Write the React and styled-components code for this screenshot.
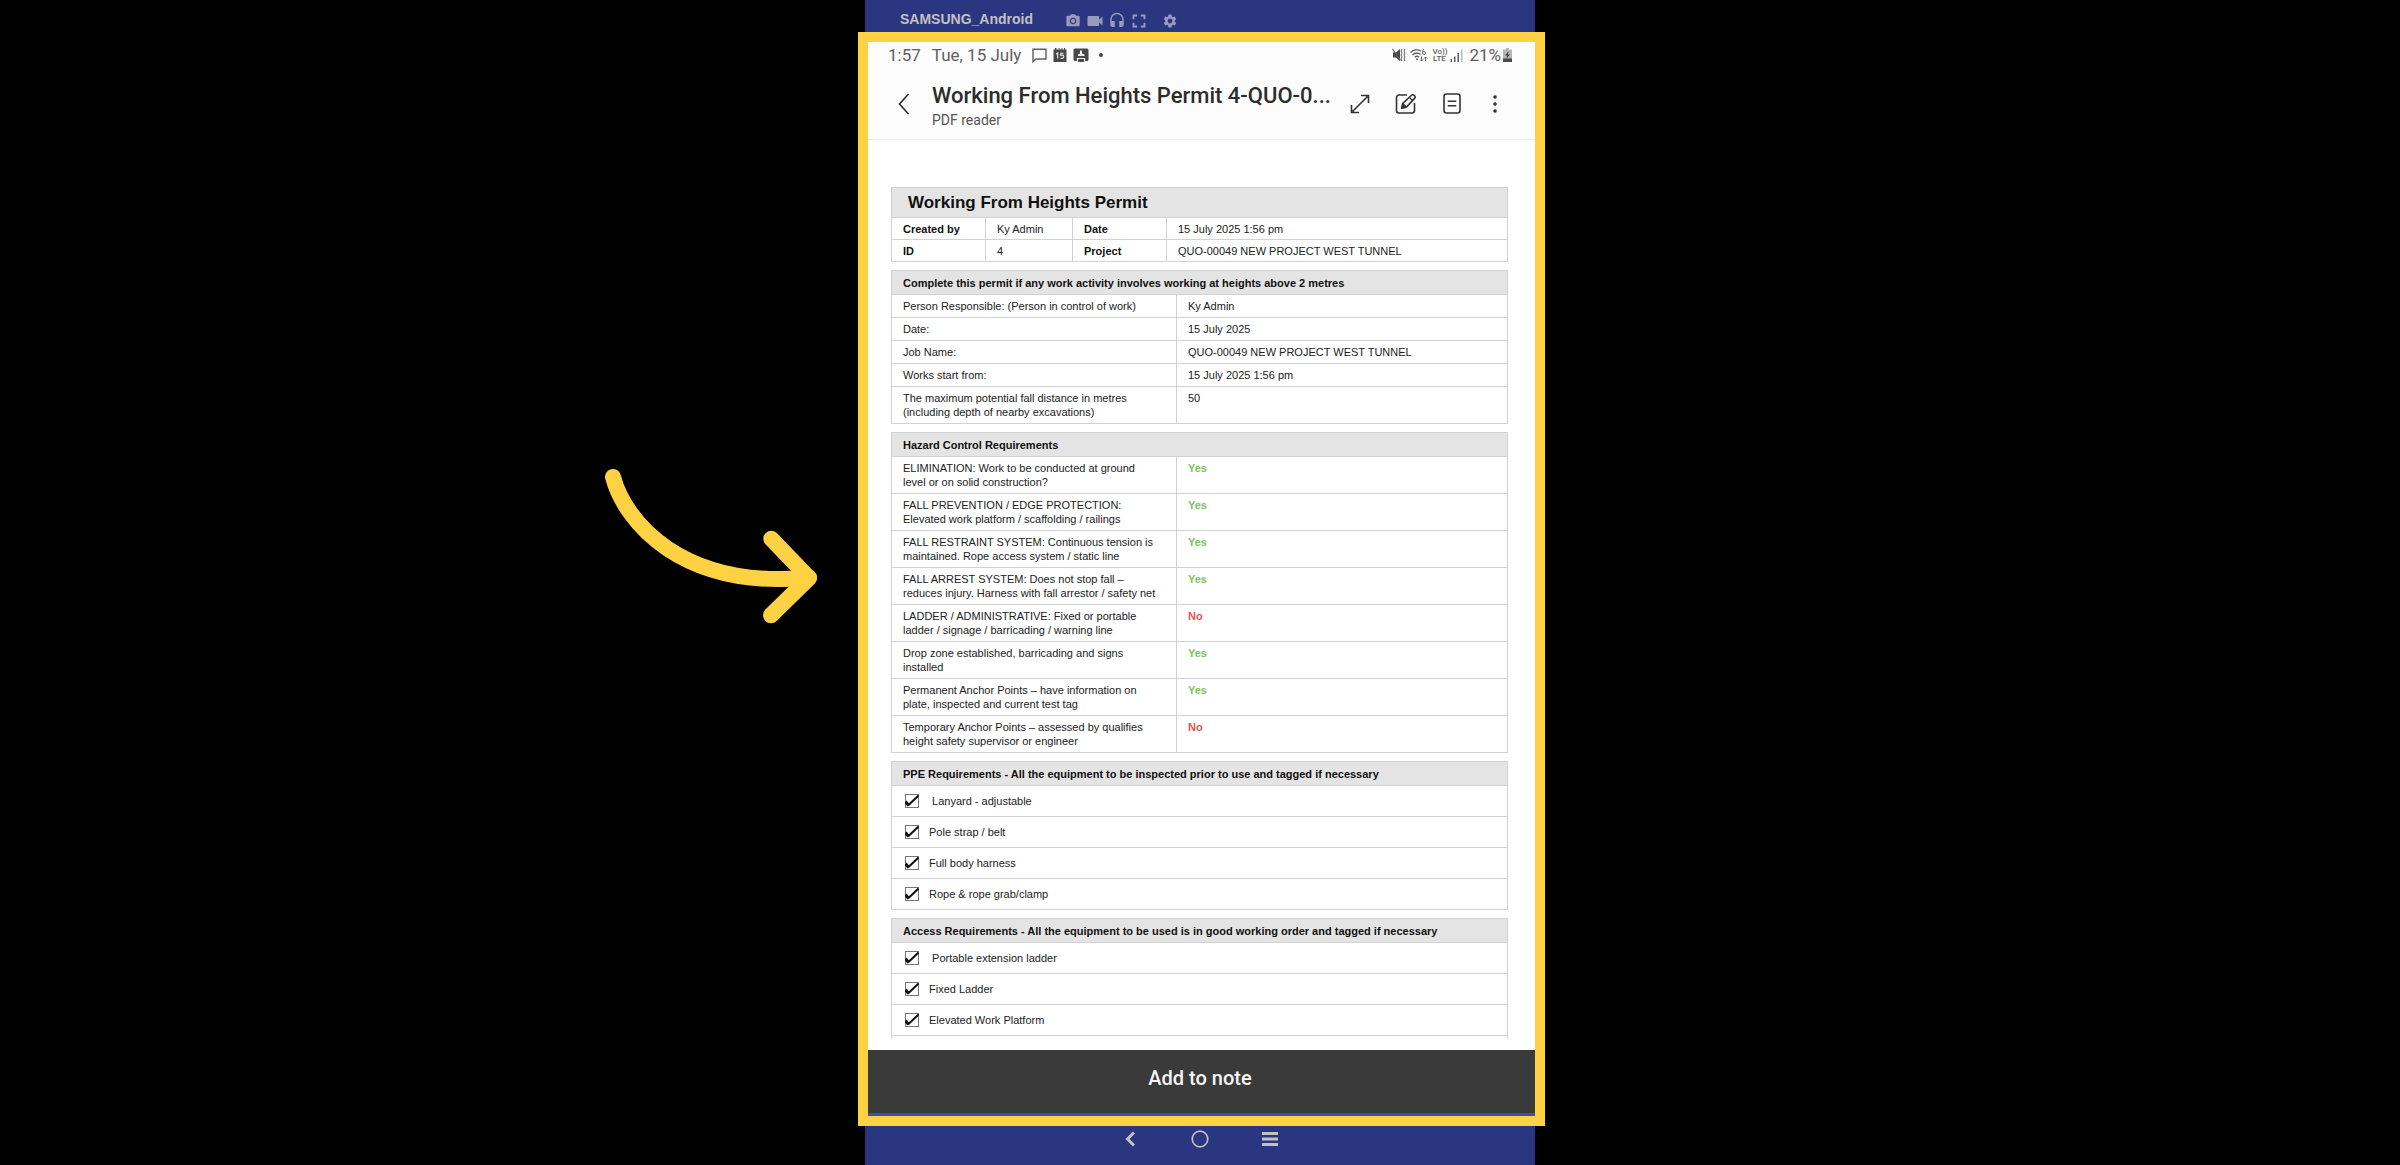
import React from 'react';
import styled, { createGlobalStyle, ThemeProvider } from 'styled-components';
import { MdPhotoCamera, MdVideocam, MdHeadset, MdFullscreen, MdSettings } from 'react-icons/md';

const theme = {
  colors: {
    navy: '#2a367f',
    yellow: '#ffd243',
    ink: '#222',
    line: '#d2d2d2',
    head: '#e4e4e4',
    yes: '#7cc35c',
    no: '#e25554',
  },
};

const GlobalStyle = createGlobalStyle`
  body {
    margin: 0;
    background: #000;
  }

  * {
    box-sizing: border-box;
  }

  button {
    padding: 0;
    border: 0;
    background: none;
    color: inherit;
    cursor: pointer;
  }

  svg {
    display: block;
  }
`;

const Page = styled.main`
  display: grid;
  grid-template-columns: 1fr minmax(0, 670px) 1fr;
  height: 100vh;
  overflow: hidden;
  background: #000;
`;

const Pointer = styled.svg`
  justify-self: end;
  margin: 40vh 46px 0 0;
  width: 214px;
  height: 160px;
  fill: none;
  stroke: ${props => props.theme.colors.yellow};
  stroke-width: 16;
  stroke-linecap: round;
  stroke-linejoin: round;
`;

const Phone = styled.section`
  display: flex;
  flex-direction: column;
  min-height: 0;
  background: ${props => props.theme.colors.navy};
`;

const DeviceBar = styled.header`
  display: flex;
  align-items: center;
  height: 32px;
  padding: 10px 35px 0;
`;

const DeviceName = styled.h1`
  margin: 0 29px 0 0;
  padding-bottom: 4px;
  font: bold 14px/20px "Liberation Sans", Arial, sans-serif;
  color: #c1c1c4;
`;

const DeviceButton = styled.button`
  display: flex;
  justify-content: center;
  align-items: center;
  width: 22px;
  height: 20px;
  margin-left: ${props => (props.$apart ? '9px' : '0')};
  color: #989bbd;
`;

const Frame = styled.div`
  flex: 1;
  display: flex;
  flex-direction: column;
  min-height: 0;
  margin: 0 -10px 0 -7px;
  border: 10px solid ${props => props.theme.colors.yellow};
  background: #fff;
`;

const StatusBar = styled.div`
  display: flex;
  align-items: center;
  height: 26px;
  padding: 0 23px 0 20px;
  font: 17px/26px Roboto, sans-serif;
  color: #606060;
`;

const StatusGroup = styled.div`
  display: flex;
  align-items: center;
  gap: ${props => props.$gap};
  margin-left: ${props => props.$left || '0'};
`;

const Clock = styled.span`
  margin-right: 11px;
`;

const Volte = styled.span`
  width: 14px;
  font: 500 8px/7px Roboto, sans-serif;
  text-align: center;
`;

const AppBar = styled.header`
  display: flex;
  align-items: center;
  height: 72px;
  padding: 0 31px 0 24px;
  border-bottom: 1px solid #ececec;
  color: #333;
`;

const Chrome = styled.div`
  background: #fcfcfc;
`;

const TitleBlock = styled.div`
  flex: 1;
  min-width: 0;
  padding-top: 6px;
  margin-left: 16px;
  font-family: Roboto, sans-serif;
`;

const FileTitle = styled.h2`
  margin: 0;
  font-weight: 500;
  font-size: 22px;
  line-height: 26px;
  white-space: nowrap;
  color: #2c2c2c;
`;

const FileKind = styled.p`
  margin: 0;
  font-size: 14px;
  line-height: 22px;
  color: #555;
`;

const Actions = styled.div`
  display: flex;
  align-items: center;
  gap: 22px;
`;

const IconButton = styled.button`
  display: flex;
  justify-content: center;
  align-items: center;
  width: ${props => props.$width || '24px'};
  height: 24px;
`;

const Viewer = styled.article`
  flex: 1;
  min-height: 0;
  overflow: hidden;
  margin: 0 27px 11px 23px;
  padding-top: 47px;
  font: 11px/14px "Liberation Sans", Arial, sans-serif;
  color: ${props => props.theme.colors.ink};
`;

const Sheet = styled.table`
  width: 100%;
  margin-bottom: 8px;
  table-layout: fixed;
  border-spacing: 0;
  border-top: 1px solid ${props => props.theme.colors.line};
  border-left: 1px solid ${props => props.theme.colors.line};
`;

const Cell = styled.td`
  height: ${props => props.$height || '23px'};
  padding: 4px 11px;
  border-right: 1px solid ${props => props.theme.colors.line};
  border-bottom: 1px solid ${props => props.theme.colors.line};
  vertical-align: top;
`;

const HeadCell = styled.th`
  height: ${props => props.$height || '24px'};
  padding: 0 11px;
  border-right: 1px solid ${props => props.theme.colors.line};
  border-bottom: 1px solid ${props => props.theme.colors.line};
  background: ${props => (props.$plain ? 'none' : props.theme.colors.head)};
  text-align: left;
  font-weight: bold;
  color: #111;
`;

const SheetTitle = styled(HeadCell)`
  height: 30px;
  padding: 0 16px;
  font-size: 17px;
  line-height: 24px;
`;

const MetaCell = styled(Cell)`
  height: 22px;
  padding: 0 11px;
  vertical-align: middle;
`;

const Answer = styled.strong`
  color: ${props => (props.$yes ? props.theme.colors.yes : props.theme.colors.no)};
`;

const CheckCell = styled(Cell)`
  height: 31px;
  padding: 0 13px;
  vertical-align: middle;
`;

const CheckLabel = styled.label`
  display: flex;
  align-items: center;
  gap: 10px;
  white-space: pre;
`;

const CheckBox = styled.span`
  position: relative;
  width: 14px;
  height: 14px;

  input {
    appearance: none;
    display: block;
    width: 14px;
    height: 14px;
    margin: 0;
    border: 1px solid #777;
  }

  svg {
    position: absolute;
    top: 0;
    left: 0;
    display: none;
    pointer-events: none;
  }

  input:checked + svg {
    display: block;
  }
`;

const AddButton = styled.button`
  && {
    padding: 14px 3px 21px 0;
    border-bottom: 3px solid #3c4ea9;
    background: #3a3a3b;
    font: 500 20px/28px Roboto, sans-serif;
    color: #f6f6f6;
  }
`;

const NavBar = styled.nav`
  display: flex;
  justify-content: center;
  gap: 46px;
  height: 39px;
  padding-top: 1px;
  color: #c2c0c2;
`;

const details = [
  ['Person Responsible: (Person in control of work)', 'Ky Admin'],
  ['Date:', '15 July 2025'],
  ['Job Name:', 'QUO-00049 NEW PROJECT WEST TUNNEL'],
  ['Works start from:', '15 July 2025 1:56 pm'],
  [['The maximum potential fall distance in metres', '(including depth of nearby excavations)'], '50'],
];

const hazards = [
  [['ELIMINATION: Work to be conducted at ground', 'level or on solid construction?'], true],
  [['FALL PREVENTION / EDGE PROTECTION:', 'Elevated work platform / scaffolding / railings'], true],
  [['FALL RESTRAINT SYSTEM: Continuous tension is', 'maintained. Rope access system / static line'], true],
  [['FALL ARREST SYSTEM: Does not stop fall –', 'reduces injury. Harness with fall arrestor / safety net'], true],
  [['LADDER / ADMINISTRATIVE: Fixed or portable', 'ladder / signage / barricading / warning line'], false],
  [['Drop zone established, barricading and signs', 'installed'], true],
  [['Permanent Anchor Points – have information on', 'plate, inspected and current test tag'], true],
  [['Temporary Anchor Points – assessed by qualifies', 'height safety supervisor or engineer'], false],
];

const ppe = [' Lanyard - adjustable', 'Pole strap / belt', 'Full body harness', 'Rope & rope grab/clamp'];
const access = [' Portable extension ladder', 'Fixed Ladder', 'Elevated Work Platform'];

const Lines = ({ text }) => (Array.isArray(text) ? <>{text[0]}<br />{text[1]}</> : text);

const Column = styled.col`
  width: ${props => props.$width || 'auto'};
`;

const SplitColumns = () => (
  <colgroup>
    <Column $width="285px" />
    <Column />
  </colgroup>
);

const Checklist = ({ title, items, more }) => (
  <Sheet>
    <thead>
      <tr><HeadCell>{title}</HeadCell></tr>
    </thead>
    <tbody>
      {items.map(item => (
        <tr key={item}>
          <CheckCell>
            <CheckLabel>
              <CheckBox>
                <input type="checkbox" defaultChecked />
                <svg width="14" height="14" viewBox="0 0 14 14" fill="none" stroke="#111">
                  <path d="M0.5 7.5 3.5 11.5" strokeWidth="3" />
                  <path d="M3 11.5 13.5 1.5" strokeWidth="2" />
                </svg>
              </CheckBox>
              {item}
            </CheckLabel>
          </CheckCell>
        </tr>
      ))}
      {more && <tr><CheckCell /></tr>}
    </tbody>
  </Sheet>
);

const NoticeIcons = () => (
  <>
    <svg width="15" height="15" viewBox="0 0 15 15" fill="none" stroke="currentColor" strokeWidth="1.4">
      <path d="M1 13.8V1.2h13v9.8H4z" />
    </svg>
    <svg width="14" height="14" viewBox="0 0 14 14">
      <path d="M0.5 1.5h1.5V0h1.5v1.5h2V0h1v1.5h2V0h1v1.5h1.5V0h1v1.5h1.5V14H0.5z" fill="#484848" />
      <path d="M3.2 6 4.7 5v5.5M10.5 5.2H7.8v2.2c2-.6 3 0 3 1.4 0 1.6-2 2-3.2 1" fill="none" stroke="#eee" strokeWidth="1.1" />
    </svg>
    <svg width="16" height="14" viewBox="0 0 16 14">
      <rect x="0.5" y="0.5" width="15" height="12.5" rx="1.5" fill="#484848" />
      <path d="M7 2.5h2v3l2.5 1v1.5H5V6.5l2-1z" fill="#eee" />
      <path d="M4.5 14V10.5h7V14" fill="#484848" stroke="#eee" strokeWidth="1.2" />
    </svg>
  </>
);

const MuteIcon = () => (
  <svg width="14" height="14" viewBox="0 0 14 14" fill="none" stroke="currentColor">
    <path d="M1 4.5h3L8 1v12L4 9.5H1z" fill="#484848" stroke="none" />
    <path d="M0.5 1 8.5 12.5" strokeWidth="1.2" />
    <path d="M10 1l-1 2 1 2-1 2 1 2-1 2 1 2M13 1l-1 2 1 2-1 2 1 2-1 2 1 2" />
  </svg>
);

const WifiIcon = () => (
  <svg width="18" height="14" viewBox="0 0 18 14" fill="none" stroke="currentColor" strokeWidth="1.3">
    <path d="M0.5 4.5C3.5 1.3 8 1.3 11 3.3M2.5 7c2.5-2.4 5.5-2.4 8-.6M4.7 9.3c1.5-1.3 3-1.3 4.3-.2" />
    <circle cx="7" cy="11.3" r="1" fill="currentColor" stroke="none" />
    <path d="M14 1.2c-2 .6-2 5.3 0 5.3s1.5-3 0-2.9c-.9.1-1.5.8-1.5 1.5M11.5 8.5v4.5M10 11.5l1.5 1.5 1.5-1.5M15.5 13V9M14 10.5 15.5 9 17 10.5" strokeWidth="1" />
  </svg>
);

const SignalIcon = () => (
  <svg width="13" height="13" viewBox="0 0 13 13" fill="currentColor">
    <path d="M0.5 10H2v3H0.5zM4 7.5h1.5V13H4zM7.5 4H9v9H7.5z" />
    <path d="M11 0.5h1.5V13H11z" fill="#bbb" />
  </svg>
);

const BatteryIcon = () => (
  <svg width="9" height="14" viewBox="0 0 9 14">
    <path d="M3 0h3v1.5h3V14H0V1.5h3z" fill="#b5b5b5" />
    <path d="M0 10.5h9V14H0zM5.5 3 2 7.5h2L3.5 10.5 7 6.5H5z" fill="#484848" />
  </svg>
);

export default () => (
  <ThemeProvider theme={theme}>
    <GlobalStyle />
    <Page>
      <Pointer viewBox="0 0 214 160" aria-hidden="true">
        <path d="M8 11C20 56 77 124 204 111.5" />
        <path d="M166.3 72.7 204 112 166 149.3" />
      </Pointer>
      <Phone>
        <DeviceBar>
          <DeviceName>SAMSUNG_Android</DeviceName>
          <DeviceButton aria-label="Take screenshot"><MdPhotoCamera size={16} /></DeviceButton>
          <DeviceButton aria-label="Record video"><MdVideocam size={20} /></DeviceButton>
          <DeviceButton aria-label="Audio"><MdHeadset size={18} /></DeviceButton>
          <DeviceButton aria-label="Full screen"><MdFullscreen size={22} /></DeviceButton>
          <DeviceButton aria-label="Settings" $apart><MdSettings size={16} /></DeviceButton>
        </DeviceBar>
        <Frame>
          <Chrome>
            <StatusBar>
              <Clock>1:57</Clock>
              <span>Tue, 15 July</span>
              <StatusGroup $gap="6px" $left="11px"><NoticeIcons /></StatusGroup>
              <StatusGroup $left="10px">
                <svg width="4" height="4" viewBox="0 0 4 4"><circle cx="2" cy="2" r="2" fill="#444" /></svg>
              </StatusGroup>
              <StatusGroup $gap="4px" $left="auto">
                <MuteIcon />
                <WifiIcon />
                <Volte>Vo))<br />LTE</Volte>
                <SignalIcon />
              </StatusGroup>
              <StatusGroup $gap="2px" $left="6px">
                <span>21%</span>
                <BatteryIcon />
              </StatusGroup>
            </StatusBar>
            <AppBar>
              <IconButton aria-label="Back">
                <svg width="12" height="22" viewBox="0 0 12 22" fill="none" stroke="currentColor" strokeWidth="1.7">
                  <path d="M10.5 1 1.5 11l9 10" />
                </svg>
              </IconButton>
              <TitleBlock>
                <FileTitle>Working From Heights Permit 4-QUO-0...</FileTitle>
                <FileKind>PDF reader</FileKind>
              </TitleBlock>
              <Actions>
                <IconButton aria-label="Expand">
                  <svg width="20" height="20" viewBox="0 0 20 20" fill="none" stroke="currentColor" strokeWidth="1.6">
                    <path d="M1.5 18.5 18.5 1.5M11 1.5h7.5V9M1.5 11v7.5H9" />
                  </svg>
                </IconButton>
                <IconButton aria-label="Edit">
                  <svg width="22" height="22" viewBox="0 0 22 22" fill="none" stroke="currentColor" strokeWidth="1.6">
                    <path d="M12 2H4a2.5 2.5 0 0 0-2.5 2.5v13A2.5 2.5 0 0 0 4 20h13a2.5 2.5 0 0 0 2.5-2.5V10" />
                    <path d="M7 15l.8-4.5 8.7-8.2a1.9 1.9 0 0 1 2.7 0l.4.4a1.9 1.9 0 0 1 0 2.7L11.500 14z" />
                    <path d="M14.5 4.5l3.3 3.2M7.8 10.5l3.7 3.5" strokeWidth="1.3" />
                    <path d="M7 15l.5-3 2.3 2.4z" fill="currentColor" />
                  </svg>
                </IconButton>
                <IconButton aria-label="Page view">
                  <svg width="18" height="21" viewBox="0 0 18 21" fill="none" stroke="currentColor" strokeWidth="1.6">
                    <rect x="1" y="1" width="16" height="19" rx="2.5" />
                    <path d="M4.8 8.3h8.4M4.8 12.7h8.4" />
                  </svg>
                </IconButton>
                <IconButton aria-label="More options" $width="18px">
                  <svg width="4" height="18" viewBox="0 0 4 18" fill="currentColor">
                    <circle cx="2" cy="2" r="1.8" />
                    <circle cx="2" cy="9" r="1.8" />
                    <circle cx="2" cy="16" r="1.8" />
                  </svg>
                </IconButton>
              </Actions>
            </AppBar>
          </Chrome>
          <Viewer>
            <Sheet>
              <colgroup>
                <Column $width="94px" />
                <Column $width="87px" />
                <Column $width="94px" />
                <Column />
              </colgroup>
              <thead>
                <tr><SheetTitle colSpan={4}>Working From Heights Permit</SheetTitle></tr>
              </thead>
              <tbody>
                <tr>
                  <HeadCell $plain $height="22px" scope="row">Created by</HeadCell>
                  <MetaCell>Ky Admin</MetaCell>
                  <HeadCell $plain $height="22px" scope="row">Date</HeadCell>
                  <MetaCell>15 July 2025 1:56 pm</MetaCell>
                </tr>
                <tr>
                  <HeadCell $plain $height="22px" scope="row">ID</HeadCell>
                  <MetaCell>4</MetaCell>
                  <HeadCell $plain $height="22px" scope="row">Project</HeadCell>
                  <MetaCell>QUO-00049 NEW PROJECT WEST TUNNEL</MetaCell>
                </tr>
              </tbody>
            </Sheet>
            <Sheet>
              <SplitColumns />
              <thead>
                <tr>
                  <HeadCell colSpan={2}>Complete this permit if any work activity involves working at heights above 2 metres</HeadCell>
                </tr>
              </thead>
              <tbody>
                {details.map(([label, value]) => (
                  <tr key={label}>
                    <Cell><Lines text={label} /></Cell>
                    <Cell>{value}</Cell>
                  </tr>
                ))}
              </tbody>
            </Sheet>
            <Sheet>
              <SplitColumns />
              <thead>
                <tr><HeadCell colSpan={2}>Hazard Control Requirements</HeadCell></tr>
              </thead>
              <tbody>
                {hazards.map(([label, yes]) => (
                  <tr key={label}>
                    <Cell><Lines text={label} /></Cell>
                    <Cell><Answer $yes={yes}>{yes ? 'Yes' : 'No'}</Answer></Cell>
                  </tr>
                ))}
              </tbody>
            </Sheet>
            <Checklist
              title="PPE Requirements - All the equipment to be inspected prior to use and tagged if necessary"
              items={ppe}
            />
            <Checklist
              title="Access Requirements - All the equipment to be used is in good working order and tagged if necessary"
              items={access}
              more
            />
          </Viewer>
          <AddButton>Add to note</AddButton>
        </Frame>
        <NavBar>
          <IconButton aria-label="Back">
            <svg width="10" height="16" viewBox="0 0 10 16" fill="none" stroke="currentColor" strokeWidth="3">
              <path d="M9 1.5 2.5 8 9 14.5" />
            </svg>
          </IconButton>
          <IconButton aria-label="Home">
            <svg width="18" height="18" viewBox="0 0 18 18" fill="none" stroke="currentColor" strokeWidth="1.7">
              <circle cx="9" cy="9" r="7.8" />
            </svg>
          </IconButton>
          <IconButton aria-label="Recent apps">
            <svg width="16" height="14" viewBox="0 0 16 14" fill="currentColor">
              <path d="M0 0h16v3H0zM0 5.5h16v3H0zM0 11h16v3H0z" />
            </svg>
          </IconButton>
        </NavBar>
      </Phone>
    </Page>
  </ThemeProvider>
);
